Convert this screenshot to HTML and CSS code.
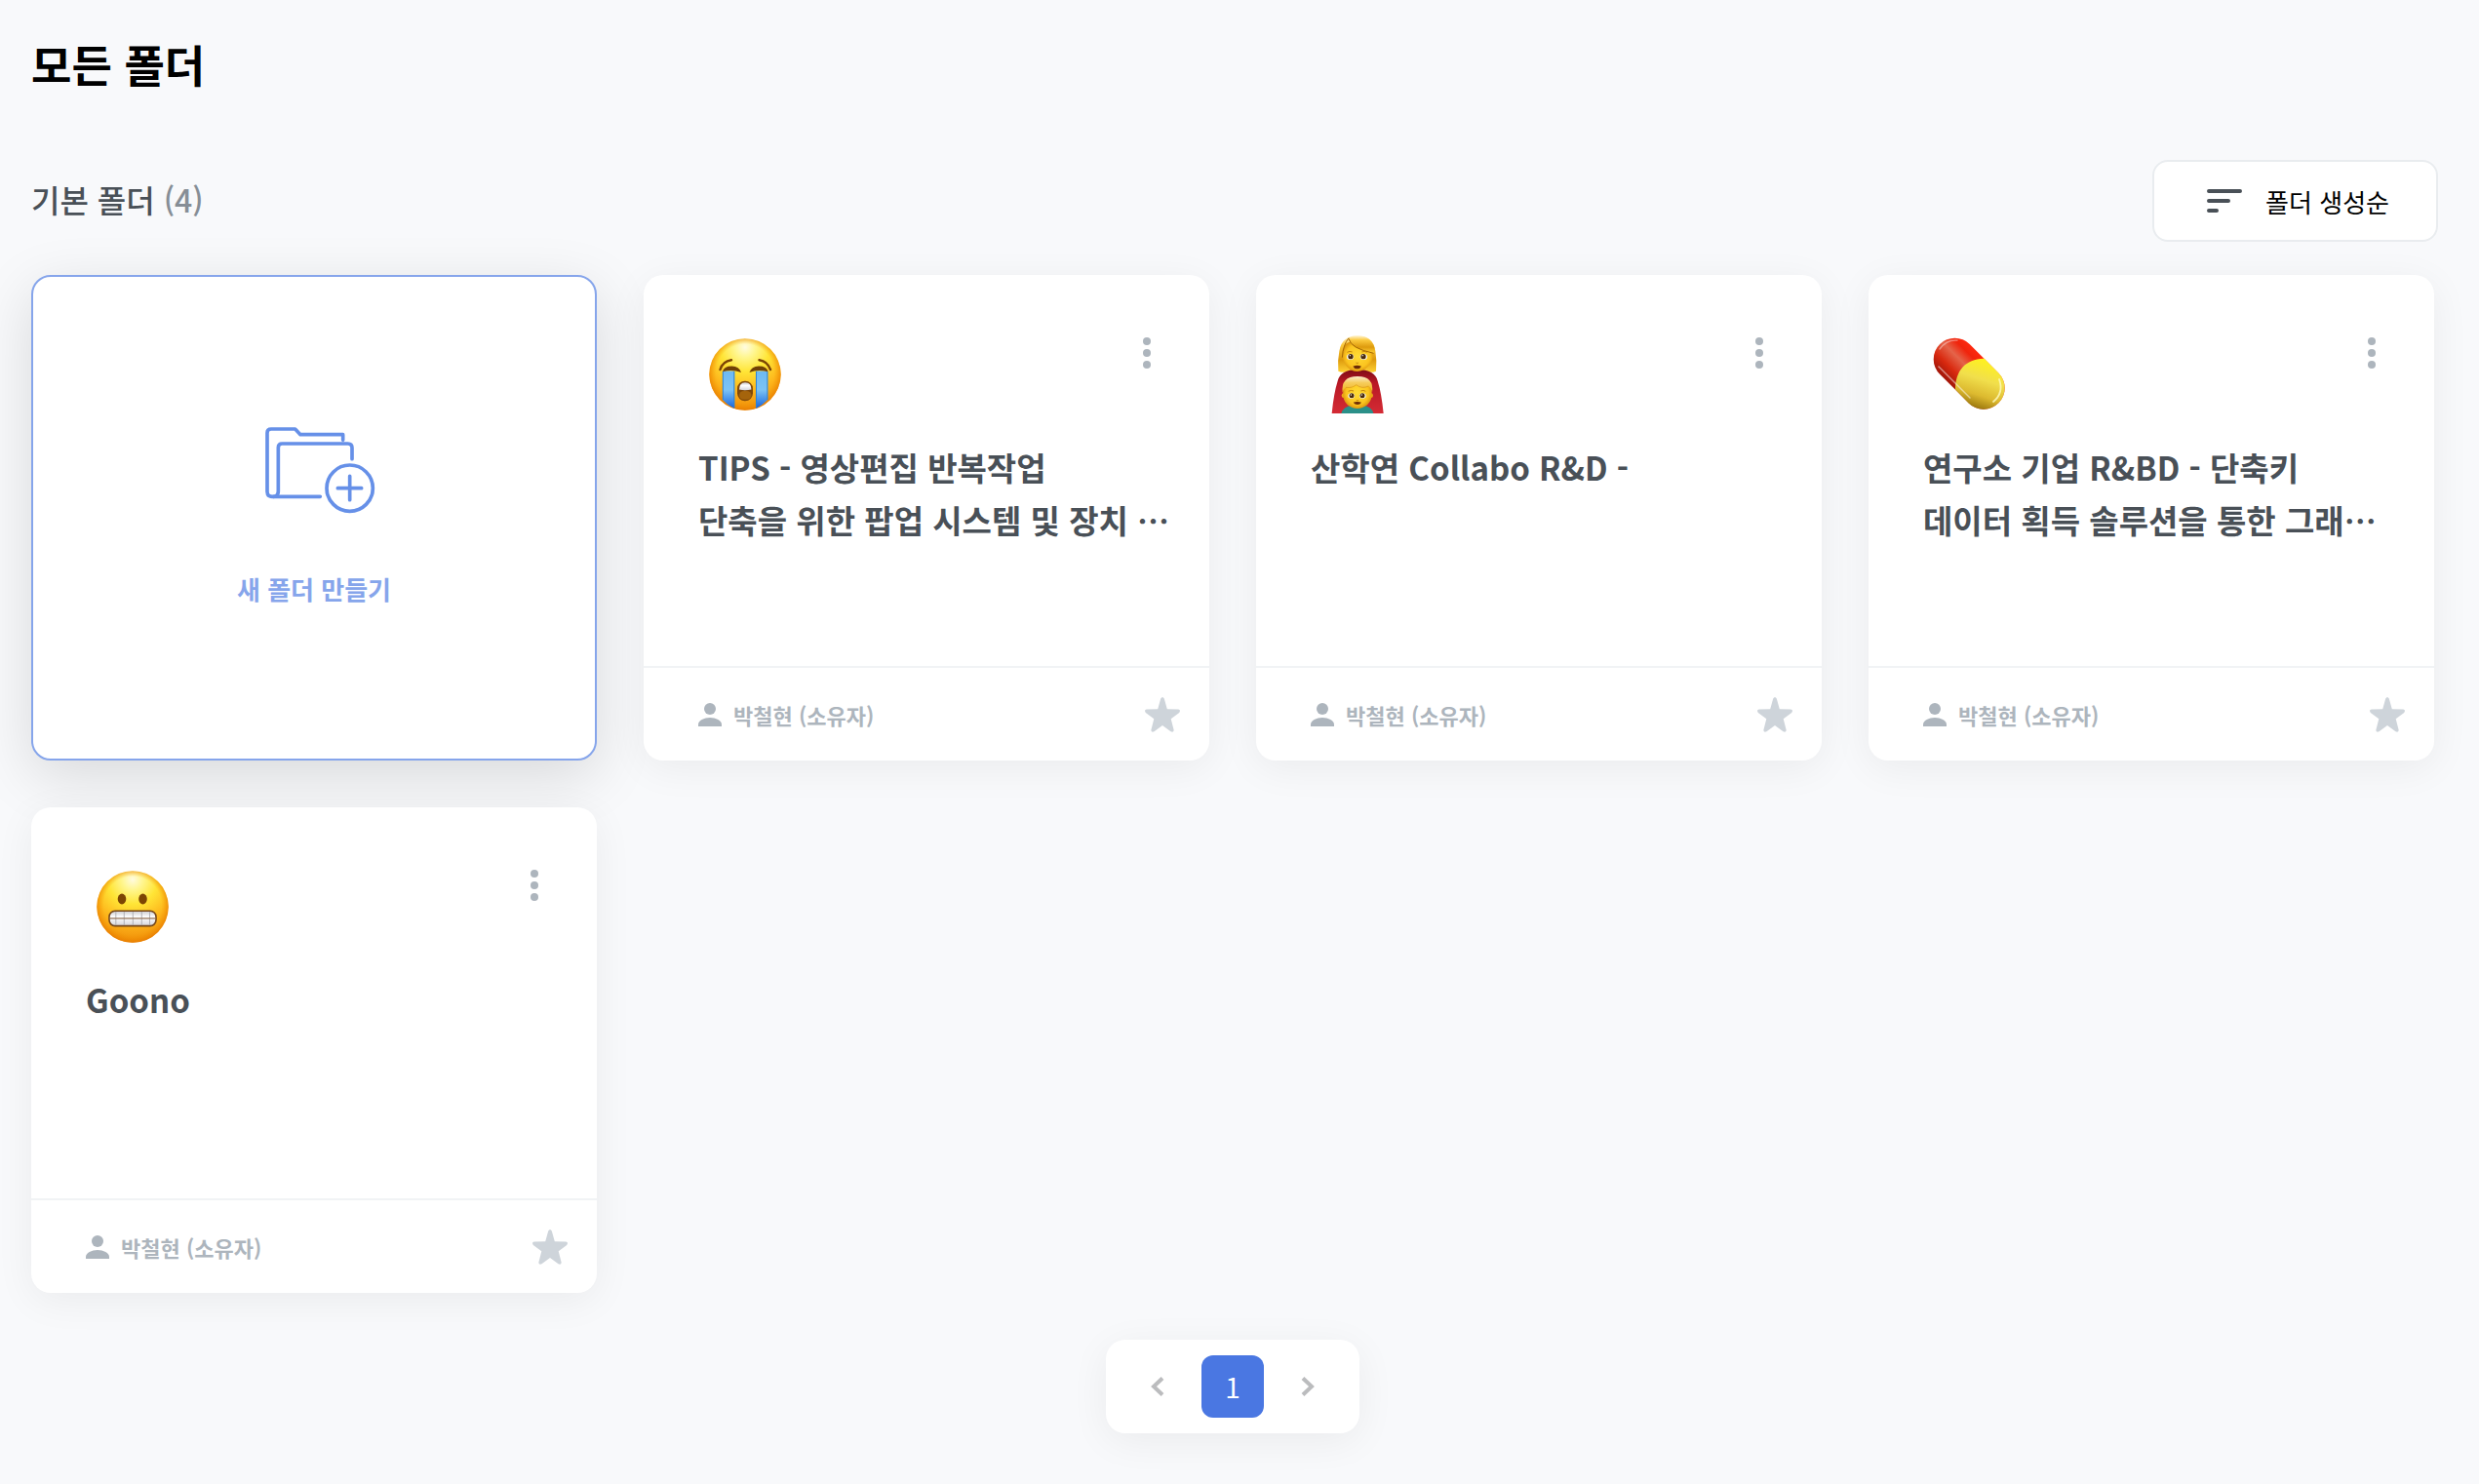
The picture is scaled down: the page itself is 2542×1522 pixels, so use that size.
FILE: index.html
```html
<!DOCTYPE html>
<html lang="ko">
<head>
<meta charset="utf-8">
<meta name="viewport" content="width=device-width, initial-scale=1">
<title>모든 폴더</title>
<link rel="stylesheet" href="styles.css">
</head>
<body>
<svg class="defs" width="0" height="0" aria-hidden="true">
  <defs>
    <radialGradient id="face" cx="50%" cy="12%" r="90%">
      <stop offset="0" stop-color="#fffbe0"/>
      <stop offset=".16" stop-color="#fff68f"/>
      <stop offset=".38" stop-color="#ffe536"/>
      <stop offset=".68" stop-color="#fdb51b"/>
      <stop offset="1" stop-color="#ee8a08"/>
    </radialGradient>
    <radialGradient id="rim" cx="50%" cy="48%" r="53%">
      <stop offset=".76" stop-color="#f59a00" stop-opacity="0"/>
      <stop offset="1" stop-color="#e67800" stop-opacity=".9"/>
    </radialGradient>
    <linearGradient id="tear" x1="0" y1="0" x2="0" y2="1">
      <stop offset="0" stop-color="#6db9f2"/>
      <stop offset=".5" stop-color="#7cc3f5"/>
      <stop offset="1" stop-color="#1664dd"/>
    </linearGradient>
    <linearGradient id="teeth" x1="0" y1="0" x2="0" y2="1">
      <stop offset="0" stop-color="#c9c9ce"/>
      <stop offset=".4" stop-color="#ffffff"/>
      <stop offset="1" stop-color="#d4d4da"/>
    </linearGradient>
    <linearGradient id="pill-red" gradientUnits="userSpaceOnUse" x1="42" y1="10" x2="12" y2="40">
      <stop offset="0" stop-color="#ff2a10"/>
      <stop offset=".2" stop-color="#f0240c"/>
      <stop offset=".45" stop-color="#e4644a"/>
      <stop offset=".75" stop-color="#d9290f"/>
      <stop offset="1" stop-color="#a8180a"/>
    </linearGradient>
    <linearGradient id="pill-yellow" gradientUnits="userSpaceOnUse" x1="62" y1="26" x2="46" y2="76">
      <stop offset="0" stop-color="#fff21c"/>
      <stop offset=".4" stop-color="#f1df4c"/>
      <stop offset=".72" stop-color="#dcb92f"/>
      <stop offset="1" stop-color="#94700a"/>
    </linearGradient>
    <linearGradient id="hair" x1="0" y1="0" x2="0" y2="1">
      <stop offset="0" stop-color="#fff3cf"/>
      <stop offset=".25" stop-color="#fbc93c"/>
      <stop offset=".65" stop-color="#dd9a0d"/>
      <stop offset="1" stop-color="#ffd234"/>
    </linearGradient>
    <radialGradient id="skin" cx="50%" cy="48%" r="55%">
      <stop offset="0" stop-color="#ffdc35"/>
      <stop offset=".7" stop-color="#fbc41f"/>
      <stop offset="1" stop-color="#d88e0b"/>
    </radialGradient>
    <linearGradient id="dress" x1="0" y1="0" x2="0" y2="1">
      <stop offset="0" stop-color="#7d0b16"/>
      <stop offset=".3" stop-color="#b81824"/>
      <stop offset="1" stop-color="#d42b35"/>
    </linearGradient>
    <linearGradient id="child-hair" x1="0" y1="0" x2="0" y2="1">
      <stop offset="0" stop-color="#fbeccb"/>
      <stop offset=".4" stop-color="#f6cc5a"/>
      <stop offset="1" stop-color="#f0b41c"/>
    </linearGradient>
    <symbol id="icon-user" viewBox="0 0 24 24">
      <ellipse cx="12" cy="6" rx="6" ry="6"/>
      <path d="M0 24v-2c0-4 6-7 12-7s12 3 12 7v2z"/>
    </symbol>
    <symbol id="icon-star" viewBox="0 0 36 36">
      <path d="M16.200 1.500q1.800-3 3.600 0l3 10.800 11.400.2q3 .7 1 3.400l-8.500 6.300 3 11.800q-.5 2.600-3.200 1.300L18 29l-8.500 6.300q-2.700 1.300-3.200-1.300l3-11.800-8.500-6.300q-2-2.700 1-3.400l11.400-.2z"/>
    </symbol>
    <symbol id="icon-more" viewBox="0 0 8 32">
      <circle cx="4" cy="4" r="4"/><circle cx="4" cy="16" r="4"/><circle cx="4" cy="28" r="4"/>
    </symbol>
  </defs>
</svg>

<main class="page">
  <h1 class="page-title">모든 폴더</h1>

  <div class="toolbar">
    <h2 class="section-title">기본 폴더 <span class="count">(4)</span></h2>
    <button class="sort" type="button">
      <svg class="sort-icon" viewBox="0 0 36 24" aria-hidden="true"><path d="M2 2h32M2 12h20M2 22h8"/></svg>
      <span>폴더 생성순</span>
    </button>
  </div>

  <div class="content">
    <div class="folders">
      <button class="card create" type="button">
        <svg class="create-icon" viewBox="117 84 378 270" aria-hidden="true">
          <path d="M395 127V110H264L248 93H174Q162 93 162 105V286Q162 301 178 301H325"/>
          <path d="M182 301Q196 299 196 284V150Q196 138 208 138H410Q423 138 423 151V185"/>
          <circle cx="416" cy="275" r="71"/>
          <path d="M379 275H452M416 238V311"/>
        </svg>
        <span>새 폴더 만들기</span>
      </button>

      <article class="card">
        <div class="card-body">
          <div class="card-top">
            <svg class="emoji" viewBox="0 0 80 80" role="img" aria-label="우는 얼굴">
              <circle cx="40" cy="40" r="36.700" fill="url(#face)"/>
              <circle cx="40" cy="40" r="36.700" fill="url(#rim)"/>
              <path d="M17 36.500h12.200V75Q22 71.500 17 66z" fill="url(#tear)"/>
              <path d="M51.200 36.500h12V66Q58 71.500 51.200 75z" fill="url(#tear)"/>
              <path d="M17.300 37v29M28.800 37v37M51.500 37v37M62.900 37v29" stroke="#2c82d6" stroke-width="1" fill="none"/>
              <path d="M14.500 35Q17 26.500 26 25.200M66 35Q63 26.500 54.500 25.200" stroke="#7b4305" stroke-width="2.400" stroke-linecap="round" fill="none"/>
              <path d="M17 37.200Q18 31.600 26.500 31.600 34 32 36 38 27 34.600 17 37.200zM63.500 37.200Q62.500 31.600 54 31.600 46.500 32 44.500 38 53 34.600 63.500 37.200z" fill="#704006"/>
              <rect x="32" y="46.800" width="16" height="20.500" rx="7.800" fill="#80490a"/>
              <rect x="34" y="57" width="12.400" height="8.800" rx="5" fill="#a5640c"/>
              <path d="M34 55.500q0-7.300 6.200-7.300t6.200 7.300q-6.200 1.500-12.400 0z" fill="url(#teeth)"/>
            </svg>
            <button class="more" type="button" aria-label="더보기"><svg viewBox="0 0 8 32"><use href="#icon-more"/></svg></button>
          </div>
          <h3 class="card-title">TIPS - 영상편집 반복작업<br>단축을 위한 팝업 시스템 및 장치 …</h3>
        </div>
        <footer class="card-footer">
          <span class="owner"><svg class="owner-icon" aria-hidden="true"><use href="#icon-user"/></svg>박철현 (소유자)</span>
          <button class="star" type="button" aria-label="즐겨찾기"><svg viewBox="0 0 36 36"><use href="#icon-star"/></svg></button>
        </footer>
      </article>

      <article class="card">
        <div class="card-body">
          <div class="card-top">
            <svg class="emoji" viewBox="216 72 240 240" role="img" aria-label="엄마와 아들">
              <path d="M277 182Q274 150 280 120 288 73 336 73 384 73 391 120 396 150 393 182 380 188 366 184H305Q290 188 277 182z" fill="url(#hair)"/>
              <path d="M257 312Q263 250 275 212 283 178 336 177 390 178 398 212 410 250 416 312z" fill="url(#dress)"/>
              <path d="M289 125Q292 97 312 92 360 90 385 123 385 150 370 166 354 183 336 183 316 183 303 167 289 150 289 125z" fill="url(#skin)"/>
              <path d="M309 80Q309 113 387 127 393 110 380 92 364 73 336 73 319 73 309 80z" fill="url(#hair)"/>
              <path d="M309 80Q292 100 289 140M309 82Q315 112 386 127" stroke="#a56804" stroke-width="3" fill="none"/>
              <ellipse cx="314" cy="138" rx="11" ry="9" fill="#fff"/><ellipse cx="355" cy="138" rx="11" ry="9" fill="#fff"/>
              <circle cx="315" cy="137" r="8" fill="#4a2a0a"/><circle cx="354" cy="137" r="8" fill="#4a2a0a"/>
              <circle cx="313" cy="134" r="2" fill="#fff"/><circle cx="352" cy="134" r="2" fill="#fff"/>
              <path d="M304 124q8-5 16-1M349 123q8-4 16 1M331 156q4 3 8 0" stroke="#bb7906" stroke-width="2.500" fill="none"/>
              <path d="M322 167q13-5 26 0-4 8-13 8t-13-8z" fill="#6b2b06"/>
              <path d="M286 312Q292 289 322 287H350Q380 289 385 312z" fill="#2b9089"/>
              <circle cx="294" cy="257" r="7" fill="#f0ad18"/><circle cx="377" cy="257" r="7" fill="#f0ad18"/>
              <path d="M292 238Q293 204 336 204T379 238Q384 270 366 286 352 297 336 297 319 297 305 286 288 270 292 238z" fill="url(#skin)"/>
              <path d="M290 248Q284 198 336 198T381 248Q378 232 370 228 352 240 332 224 308 236 300 232 293 236 290 248z" fill="url(#child-hair)"/>
              <path d="M300 232Q320 235 332 224 350 238 370 228" stroke="#d6951a" stroke-width="2" fill="none"/>
              <ellipse cx="317" cy="258" rx="10" ry="8" fill="#fff"/><ellipse cx="352" cy="258" rx="10" ry="8" fill="#fff"/>
              <circle cx="318" cy="257" r="7.500" fill="#4a2a0a"/><circle cx="351" cy="257" r="7.500" fill="#4a2a0a"/>
              <circle cx="316" cy="255" r="2" fill="#fff"/><circle cx="349" cy="255" r="2" fill="#fff"/>
              <path d="M308 244q8-5 16-1M346 243q8-4 15 1M332 271q4 3 8 0" stroke="#bb7906" stroke-width="2.500" fill="none"/>
              <path d="M323 278q12-4 25 0-4 7-12 7t-13-7z" fill="#6b2b06"/>
            </svg>
            <button class="more" type="button" aria-label="더보기"><svg viewBox="0 0 8 32"><use href="#icon-more"/></svg></button>
          </div>
          <h3 class="card-title">산학연 Collabo R&amp;D -</h3>
        </div>
        <footer class="card-footer">
          <span class="owner"><svg class="owner-icon" aria-hidden="true"><use href="#icon-user"/></svg>박철현 (소유자)</span>
          <button class="star" type="button" aria-label="즐겨찾기"><svg viewBox="0 0 36 36"><use href="#icon-star"/></svg></button>
        </footer>
      </article>

      <article class="card">
        <div class="card-body">
          <div class="card-top">
            <svg class="emoji" viewBox="0 0 80 80" role="img" aria-label="알약">
              <path d="M24.400 24.400L54 54" stroke="url(#pill-red)" stroke-width="43.400" stroke-linecap="round"/>
              <path d="M54.700 23.800L69.300 38.600A21.700 21.700 0 0 1 38.600 69.400L25 55.500C25 36 36 24 54.700 23.800z" fill="url(#pill-yellow)"/>
              <path d="M8 32L40 64" stroke="#fff" stroke-opacity=".5" stroke-width="1.500" stroke-linecap="round"/>
              <path d="M70 45Q75 59 64 68" stroke="#fffbc0" stroke-opacity=".8" stroke-width="1.800" stroke-linecap="round" fill="none"/>
              <path d="M9 14Q16 4 27 5" stroke="#fff" stroke-opacity=".4" stroke-width="1.500" stroke-linecap="round" fill="none"/>
            </svg>
            <button class="more" type="button" aria-label="더보기"><svg viewBox="0 0 8 32"><use href="#icon-more"/></svg></button>
          </div>
          <h3 class="card-title">연구소 기업 R&amp;BD - 단축키<br>데이터 획득 솔루션을 통한 그래…</h3>
        </div>
        <footer class="card-footer">
          <span class="owner"><svg class="owner-icon" aria-hidden="true"><use href="#icon-user"/></svg>박철현 (소유자)</span>
          <button class="star" type="button" aria-label="즐겨찾기"><svg viewBox="0 0 36 36"><use href="#icon-star"/></svg></button>
        </footer>
      </article>

      <article class="card">
        <div class="card-body">
          <div class="card-top">
            <svg class="emoji" viewBox="0 0 80 80" role="img" aria-label="이를 드러낸 얼굴">
              <circle cx="40" cy="40" r="36.700" fill="url(#face)"/>
              <circle cx="40" cy="40" r="36.700" fill="url(#rim)"/>
              <ellipse cx="29" cy="32" rx="4.300" ry="5.400" fill="#7c4503"/>
              <ellipse cx="50.500" cy="32" rx="4.300" ry="5.400" fill="#7c4503"/>
              <rect x="16" y="44.200" width="48" height="15.400" rx="6" fill="url(#teeth)" stroke="#74461b" stroke-width="1.600"/>
              <path d="M22.800 45v14M31.300 45v14M40.300 45v14M49.300 45v14M57.500 45v14" stroke="#a4a4aa" stroke-width=".8"/>
              <path d="M16.500 51.800h47" stroke="#96755a" stroke-width="1.200"/>
            </svg>
            <button class="more" type="button" aria-label="더보기"><svg viewBox="0 0 8 32"><use href="#icon-more"/></svg></button>
          </div>
          <h3 class="card-title">Goono</h3>
        </div>
        <footer class="card-footer">
          <span class="owner"><svg class="owner-icon" aria-hidden="true"><use href="#icon-user"/></svg>박철현 (소유자)</span>
          <button class="star" type="button" aria-label="즐겨찾기"><svg viewBox="0 0 36 36"><use href="#icon-star"/></svg></button>
        </footer>
      </article>
    </div>

    <nav class="pagination" aria-label="페이지">
      <button class="page-step" type="button" aria-label="이전"><svg viewBox="0 0 14 20"><path d="M12 1.500L3 10l9 8.500"/></svg></button>
      <button class="page-number" type="button" aria-current="page">1</button>
      <button class="page-step" type="button" aria-label="다음"><svg viewBox="0 0 14 20"><path d="M2 1.500L11 10l-9 8.500"/></svg></button>
    </nav>
  </div>
</main>
</body>
</html>
```
FILE: styles.css
```css
* {
  box-sizing: border-box;
}

body {
  margin: 0;
  background: #f8f9fb;
  color: #495057;
  font-family: "Noto Sans CJK KR", "Noto Sans", sans-serif;
}

h1,
h2,
h3 {
  margin: 0;
}

button {
  border: 0;
  padding: 0;
  background: none;
  color: inherit;
  font: inherit;
  cursor: pointer;
}

svg {
  display: block;
}

.defs {
  position: absolute;
}

.page {
  padding: 32px 42px 52px 32px;
}

.page-title {
  color: #000;
  font-size: 45px;
  font-weight: 700;
  line-height: 68px;
}

.toolbar {
  display: flex;
  align-items: center;
  justify-content: space-between;
  margin-top: 64px;
}

.section-title {
  padding-bottom: 4px;
  font-size: 32px;
  font-weight: 500;
  line-height: 48px;
}

.count {
  color: #868e96;
}

.sort {
  display: flex;
  align-items: center;
  gap: 24px;
  height: 84px;
  padding: 0 48px 0 54px;
  border: 2px solid #e9ecef;
  border-radius: 16px;
  background: #fff;
  color: #000;
  font-size: 26px;
}

.sort-icon {
  width: 36px;
  height: 24px;
  fill: none;
  stroke: #495057;
  stroke-width: 4;
  stroke-linecap: round;
}

.content {
  margin: 34px 4px 0 0;
}

.folders {
  display: grid;
  grid-template-columns: repeat(4, minmax(0, 1fr));
  gap: 48px;
}

.card {
  display: flex;
  flex-direction: column;
  min-height: 498px;
  border-radius: 20px;
  background: #fff;
  box-shadow: 0 8px 40px rgba(0, 0, 0, 0.06);
}

.create {
  align-items: center;
  justify-content: center;
  gap: 58px;
  padding-bottom: 4px;
  border: 2px solid #86a5eb;
  box-shadow: 0 16px 60px rgba(0, 0, 0, 0.13);
  color: #86a5eb;
  font-size: 26px;
  font-weight: 700;
}

.create-icon {
  width: 126px;
  height: 90px;
  fill: none;
  stroke: #6690e8;
  stroke-width: 11;
  stroke-linecap: round;
  stroke-linejoin: round;
}

.card-body {
  flex: 1;
  padding: 62px 30px 0 56px;
}

.card-top {
  display: flex;
  align-items: flex-start;
  justify-content: space-between;
  padding: 0 30px 0 8px;
}

.emoji {
  width: 80px;
  height: 80px;
}

.more {
  padding-top: 2px;
}

.more svg {
  width: 8px;
  height: 32px;
  fill: #adb5bd;
}

.card-title {
  margin-top: 28px;
  font-size: 33px;
  font-weight: 700;
  line-height: 54px;
}

.card-footer {
  display: flex;
  align-items: center;
  justify-content: space-between;
  height: 97px;
  padding: 0 30px 0 56px;
  border-top: 2px solid #f1f3f5;
}

.owner {
  display: flex;
  align-items: center;
  gap: 12px;
  color: #adb5bd;
  font-size: 22px;
  font-weight: 700;
}

.owner-icon {
  width: 24px;
  height: 24px;
  fill: #adb5bd;
}

.star svg {
  width: 36px;
  height: 36px;
  fill: #ced4da;
}

.pagination {
  display: flex;
  align-items: center;
  justify-content: space-between;
  width: 260px;
  height: 96px;
  margin: 48px auto 0;
  padding: 0 46px;
  border-radius: 20px;
  background: #fff;
  box-shadow: 0 8px 40px rgba(0, 0, 0, 0.06);
}

.page-step svg {
  width: 14px;
  height: 20px;
  fill: none;
  stroke: #bbbcbe;
  stroke-width: 4;
}

.page-number {
  width: 64px;
  height: 64px;
  border-radius: 12px;
  background: #4a77e2;
  color: #fff;
  font-size: 28px;
  font-weight: 400;
}

@media (max-width: 1800px) {
  .folders {
    grid-template-columns: repeat(auto-fill, minmax(480px, 1fr));
  }
}
```
